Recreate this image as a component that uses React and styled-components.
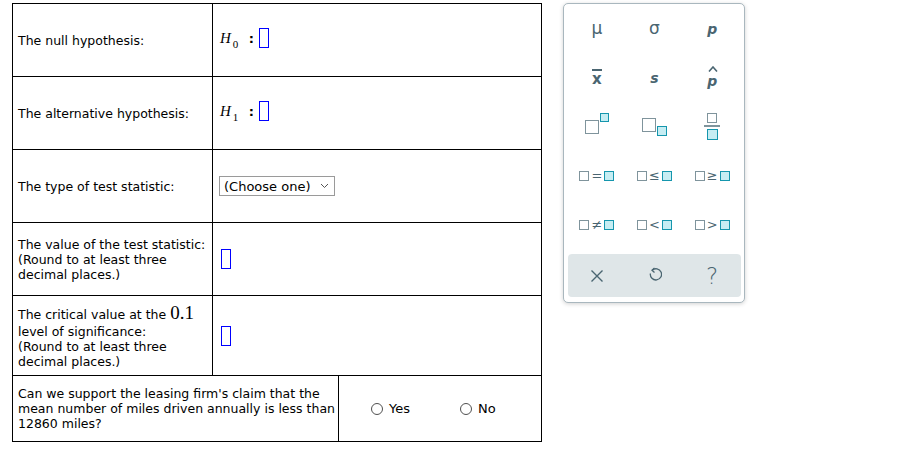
import React from "react";
import styled, { createGlobalStyle } from "styled-components";

const Global = createGlobalStyle`
  body {
    margin: 0;
    background: #fff;
    font-family: "DejaVu Sans", Verdana, sans-serif;
    color: #000;
  }
`;

const Page = styled.div`
  display: flex;
  align-items: flex-start;
  gap: 21px;
  padding: 3px 0 0 12px;
`;

const Table = styled.table`
  border-collapse: collapse;
  table-layout: fixed;
  width: 529px;
  font-size: 12.5px;
  line-height: 15px;
`;

const Row = styled.tr`
  height: ${({ $h }) => $h}px;
`;

const Cell = styled.td`
  border: 1px solid #000;
  padding: 0 5px;
  vertical-align: middle;
  white-space: nowrap;
`;

const Hyp = styled.span`
  display: inline-flex;
  align-items: center;
  position: relative;
  top: -2px;
`;

const H = styled.span`
  font-family: "Liberation Serif", serif;
  font-style: italic;
  font-size: 15px;
  margin-left: 2px;
`;

const Sub = styled.span`
  font-family: "Liberation Serif", serif;
  font-size: 11px;
  position: relative;
  top: 6px;
  margin-left: 2px;
  width: 16px;
`;

const Colon = styled.span`
  font-weight: bold;
  font-size: 13px;
  margin-right: 5px;
`;

const Blank = styled.span`
  display: inline-block;
  width: 10px;
  height: 20px;
  box-sizing: border-box;
  border: 1px solid #0000ff;
  vertical-align: middle;
  margin-left: ${({ $ml }) => $ml || 0}px;
`;

const Select = styled.div`
  display: inline-flex;
  align-items: center;
  justify-content: space-between;
  box-sizing: border-box;
  width: 116px;
  height: 20px;
  border: 1px solid #9a9a9a;
  padding: 0 5px 0 4px;
  margin-left: 1px;
  font-size: 13px;
  color: #000;
`;

const BigNum = styled.span`
  font-family: "Liberation Serif", serif;
  font-size: 19px;
  line-height: 22px;
`;

const Choices = styled.div`
  display: flex;
  align-items: center;
  gap: 50px;
  padding-left: 27px;
`;

const Choice = styled.label`
  display: inline-flex;
  align-items: center;
  gap: 6px;
  font-size: 13px;
`;

const Radio = styled.span`
  display: inline-block;
  width: 12px;
  height: 12px;
  box-sizing: border-box;
  border: 1px solid #505050;
  border-radius: 50%;
`;

/* palette */
const Panel = styled.div`
  width: 182px;
  box-sizing: border-box;
  border: 1px solid #a9b7be;
  border-radius: 5px;
  box-shadow: 0 1px 4px rgba(0, 0, 0, 0.18);
  padding: 0 3px 5px 4px;
  background: #fff;
`;

const Grid = styled.div`
  display: grid;
  grid-template-columns: repeat(3, 1fr);
  grid-auto-rows: 49px;
  align-items: center;
  justify-items: center;
`;

const Sym = styled.span`
  font-family: "DejaVu Sans", sans-serif;
  color: #4a6571;
  font-size: ${({ $size }) => $size || 14}px;
  font-style: ${({ $italic }) => ($italic ? "italic" : "normal")};
  font-weight: ${({ $bold }) => ($bold ? "bold" : "normal")};
  line-height: 1;
  position: relative;
`;

const Bar = styled.span`
  display: inline-block;
  border-top: 2px solid #4a6571;
  padding-top: 1px;
  line-height: 1;
`;

const HatMark = styled.svg`
  position: absolute;
  left: 1px;
  top: -8px;
`;

const Sq = styled.span`
  display: inline-block;
  box-sizing: border-box;
  width: ${({ $s }) => $s}px;
  height: ${({ $s }) => $s}px;
  border: 1.5px solid ${({ $teal }) => ($teal ? "#1596ad" : "#7f949c")};
  background: ${({ $teal }) => ($teal ? "#c6edf3" : "#fff")};
`;

const Stack = styled.span`
  display: inline-flex;
  align-items: ${({ $align }) => $align};
  gap: 1px;
`;

const Frac = styled.span`
  display: inline-flex;
  flex-direction: column;
  align-items: center;
  gap: 2px;
`;

const FracLine = styled.span`
  width: 16px;
  height: 2px;
  background: #7f949c;
`;

const Rel = styled.span`
  display: inline-flex;
  align-items: center;
  gap: 2px;
  color: #4a6571;
  font-size: 13px;
  line-height: 1;
`;

const Toolbar = styled.div`
  margin-top: 5px;
  height: 43px;
  border-radius: 4px;
  background: #dfe6e8;
  display: grid;
  grid-template-columns: repeat(3, 1fr);
  align-items: center;
  justify-items: center;
`;

const Question = styled.span`
  font-family: "DejaVu Sans", sans-serif;
  font-weight: 200;
  font-size: 23px;
  color: #4a6571;
`;

const rows = [
  {
    label: "The null hypothesis:",
    value: (
      <Hyp>
        <H>H</H>
        <Sub>0</Sub>
        <Colon>:</Colon>
        <Blank />
      </Hyp>
    ),
  },
  {
    label: "The alternative hypothesis:",
    value: (
      <Hyp>
        <H>H</H>
        <Sub>1</Sub>
        <Colon>:</Colon>
        <Blank />
      </Hyp>
    ),
  },
  {
    label: "The type of test statistic:",
    value: (
      <Select>
        (Choose one)
        <svg width="9" height="6" viewBox="0 0 9 6">
          <path d="M1 1 L4.5 4.5 L8 1" fill="none" stroke="#555" strokeWidth="1" />
        </svg>
      </Select>
    ),
  },
  {
    label: (
      <>
        The value of the test statistic:
        <br />
        (Round to at least three
        <br />
        decimal places.)
      </>
    ),
    value: <Blank $ml={3} />,
  },
];

const relations = ["=", "≤", "≥", "≠", "<", ">"];

function Palette() {
  return (
    <Panel>
      <Grid>
        <Sym $size={17}>μ</Sym>
        <Sym $size={17}>σ</Sym>
        <Sym $italic $bold $size={14}>p</Sym>
        <Sym $bold $size={15}>
          <Bar>x</Bar>
        </Sym>
        <Sym $italic $bold $size={14}>s</Sym>
        <Sym $italic $bold $size={14} style={{ top: 3 }}>
          <HatMark width="10" height="6" viewBox="0 0 10 6">
            <path d="M1 5.5 L5 1 L9 5.5" fill="none" stroke="#4a6571" strokeWidth="1.6" />
          </HatMark>
          p
        </Sym>
        <Stack $align="flex-end">
          <Sq $s={14} />
          <Sq $s={9} $teal style={{ alignSelf: "flex-start", marginTop: -7 }} />
        </Stack>
        <Stack $align="flex-start">
          <Sq $s={14} />
          <Sq $s={10} $teal style={{ marginTop: 8 }} />
        </Stack>
        <Frac>
          <Sq $s={10} />
          <FracLine />
          <Sq $s={11} $teal />
        </Frac>
        {relations.map((r) => (
          <Rel key={r}>
            <Sq $s={10} />
            {r}
            <Sq $s={10} $teal />
          </Rel>
        ))}
      </Grid>
      <Toolbar>
        <svg width="14" height="14" viewBox="0 0 14 14">
          <path d="M1.5 1.5 L12.5 12.5 M12.5 1.5 L1.5 12.5" stroke="#4a6571" strokeWidth="1.4" fill="none" />
        </svg>
        <svg width="14" height="17" viewBox="0 0 14 17">
          <path
            d="M4.2 3.2 A5.6 5.6 0 1 1 2.4 6.5"
            stroke="#4a6571"
            strokeWidth="1.3"
            fill="none"
          />
          <path d="M6.5 1 L4 3.3 L6.5 5.5" stroke="#4a6571" strokeWidth="1.3" fill="none" />
        </svg>
        <Question>?</Question>
      </Toolbar>
    </Panel>
  );
}

export default function App() {
  return (
    <>
      <Global />
      <Page>
        <Table>
          <colgroup>
            <col style={{ width: 200 }} />
            <col style={{ width: 126 }} />
            <col style={{ width: 203 }} />
          </colgroup>
          <tbody>
            {rows.map((r, i) => (
              <Row key={i} $h={73}>
                <Cell>{r.label}</Cell>
                <Cell colSpan={2}>{r.value}</Cell>
              </Row>
            ))}
            <Row $h={80}>
              <Cell>
                The critical value at the <BigNum>0.1</BigNum>
                <br />
                level of significance:
                <br />
                (Round to at least three
                <br />
                decimal places.)
              </Cell>
              <Cell colSpan={2}>
                <Blank $ml={3} />
              </Cell>
            </Row>
            <Row $h={66}>
              <Cell colSpan={2}>
                Can we support the leasing firm's claim that the
                <br />
                mean number of miles driven annually is less than
                <br />
                12860 miles?
              </Cell>
              <Cell>
                <Choices>
                  <Choice>
                    <Radio />
                    Yes
                  </Choice>
                  <Choice>
                    <Radio />
                    No
                  </Choice>
                </Choices>
              </Cell>
            </Row>
          </tbody>
        </Table>
        <Palette />
      </Page>
    </>
  );
}
